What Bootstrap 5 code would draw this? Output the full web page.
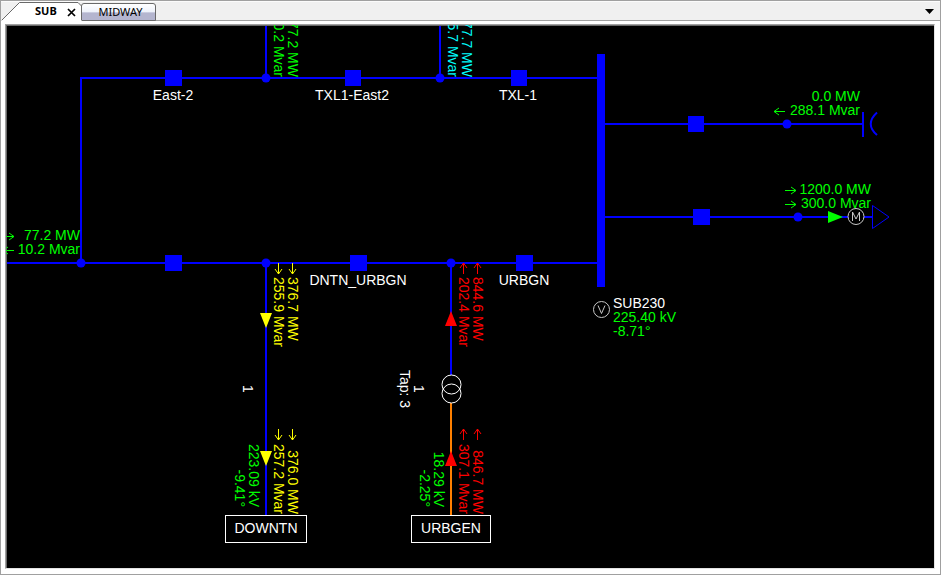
<!DOCTYPE html>
<html lang="en">
<head>
<meta charset="utf-8">
<meta name="viewport" content="width=device-width, initial-scale=1">
<title>SUB</title>
<link rel="stylesheet" href="https://cdn.jsdelivr.net/npm/bootstrap@5.3.0/dist/css/bootstrap.min.css">
<style>
.frame { border: 1px solid #a0a0a0; background: #fff; }
.tabstrip { height: 20px; background: #f0f0f0; border-top: 1px solid #fbfbfb; border-bottom: 1px solid #a0a0a0; font: 11px/16px "Noto Sans", "Open Sans", sans-serif; }
.tabstrip button { border: 0; background: transparent; padding: 0; color: #000; font: inherit; line-height: 16px; }
.tab-open { width: 80px; height: 19px; margin-bottom: -1px; padding: 1px 5px 2px 34px; }
.tab-open .name { font-weight: 700; }
.tab-open svg.outline { position: absolute; left: 0; top: 0; z-index: -1; }
.tabstrip .tab-back { width: 75px; height: 18px; padding: 0 0 0 4px; margin-bottom: -1px; border: 1px solid #696969; border-radius: 3px 3px 0 0; background: linear-gradient(#fff 0, #eef2fb 50%, #b4b5cf 55%, #b4b5cf 100%); }
.tabstrip svg { display: block; }
.tabstrip .more { padding: 3px 5px 0; }
.board { margin: 3px 5px 5px 4px; background: #000; border: 1px solid; border-color: #a0a0a0 #e3e3e3 #e3e3e3 #a0a0a0; box-shadow: inset 1px 1px 0 #696969; }
.board svg { font: 14px "Liberation Sans", Arial, sans-serif; }
.wire { stroke: #00f; stroke-width: 2; fill: none; shape-rendering: crispEdges; }
.breaker { fill: #00f; shape-rendering: crispEdges; }
.joint { fill: #00f; }
.flow { fill: none; stroke: currentColor; stroke-width: 1; }
.t-green { color: #0f0; fill: #0f0; }
.t-yellow { color: #ff0; fill: #ff0; }
.t-red { color: #f00; fill: #f00; }
.t-cyan { color: #0ff; fill: #0ff; }
.t-white { fill: #fff; }
.mid { text-anchor: middle; }
.fin { text-anchor: end; }
.bus-box { fill: #000; stroke: #fff; }
.dial { fill: #000; stroke: #c8c8c8; }
.dial-letter { fill: none; stroke: #c8c8c8; }
</style>
<script src="https://cdn.jsdelivr.net/npm/bootstrap@5.3.0/dist/js/bootstrap.bundle.min.js"></script>
</head>
<body>
<main class="frame d-flex flex-column vh-100 overflow-hidden">
  <div class="tabstrip d-flex align-items-end flex-shrink-0">
    <div class="tab-open position-relative z-1 d-flex justify-content-between align-items-center">
      <svg class="outline" width="81" height="19" aria-hidden="true"><path d="M0 19L18.500 .5H77L80.500 4V19z" fill="#fff"/><path d="M1 18L18.500 .5H77L80.500 4V18" fill="none" stroke="#696969"/></svg>
      <button class="name" type="button">SUB</button>
      <button type="button" aria-label="Close SUB"><svg width="9" height="16" aria-hidden="true"><path d="M1 6L8 13M8 6L1 13" stroke="#000" stroke-width="1.700"/></svg></button>
    </div>
    <button class="tab-back" type="button">MIDWAY</button>
    <button class="more ms-auto align-self-start" type="button" aria-label="Open tabs"><svg width="11" height="12" aria-hidden="true"><path d="M1 4H10L5.500 9z"/></svg></button>
  </div>
  <div class="board d-flex flex-grow-1 overflow-hidden">
    <svg width="100%" height="100%" role="img" aria-label="Substation one-line diagram">
      <defs>
        <path id="ar" d="M0 .5H11M6-3L11 .5L6 4"/>
      </defs>
      <g transform="translate(-6 -25)">
        <!-- Lines -->
        <g class="wire">
          <path d="M597 78H81V263M7 263H597M266 26V78M440 26V78M266 263V515M451 263V375M605 124H862M605 217H872"/>
          <path d="M863 112V137"/>
          <path d="M451 403V515" stroke="#ff8000"/>
        </g>
        <path d="M877 112.500Q864.500 124 877 135" fill="none" stroke="#00f" stroke-width="2"/>
        <path d="M872.500 205.500L889 217L872.500 228.500z" fill="#000" stroke="#00f"/>
        <!-- Bus and breakers -->
        <g class="breaker">
          <rect x="597" y="54" width="8" height="233"/>
          <rect x="165" y="70" width="17" height="16"/>
          <rect x="345" y="70" width="16" height="16"/>
          <rect x="511" y="70" width="16" height="16"/>
          <rect x="165" y="255" width="17" height="16"/>
          <rect x="350" y="255" width="17" height="16"/>
          <rect x="516" y="255" width="17" height="16"/>
          <rect x="688" y="116" width="16" height="16"/>
          <rect x="693" y="209" width="17" height="16"/>
        </g>
        <g class="joint">
          <circle cx="266" cy="78" r="4.500"/><circle cx="440" cy="78" r="4.500"/>
          <circle cx="81" cy="263" r="4.500"/><circle cx="266" cy="263" r="4.500"/>
          <circle cx="451" cy="263" r="4.500"/><circle cx="787" cy="124" r="4.500"/>
          <circle cx="798" cy="217" r="4.500"/>
        </g>
        <!-- Device names -->
        <g class="t-white mid">
          <text x="173" y="100">East-2</text>
          <text x="352" y="100">TXL1-East2</text>
          <text x="518" y="100">TXL-1</text>
          <text x="358" y="285">DNTN_URBGN</text>
          <text x="524" y="285">URBGN</text>
        </g>
        <!-- Bus readings -->
        <circle class="dial" cx="601.500" cy="309.500" r="8"/>
        <path class="dial-letter" d="M598 305.500L601.500 313.500L605 305.500"/>
        <text class="t-white" x="613" y="308">SUB230</text>
        <g class="t-green">
          <text x="613" y="322">225.40 kV</text>
          <text x="613" y="336">-8.71°</text>
        </g>
        <!-- Shunt and load -->
        <g class="t-green fin">
          <text x="860" y="101">0.0 MW</text>
          <text x="860" y="115">288.1 Mvar</text>
          <text x="871" y="194">1200.0 MW</text>
          <text x="871" y="208">300.0 Mvar</text>
          <text x="80" y="240">77.2 MW</text>
          <text x="80" y="254">10.2 Mvar</text>
        </g>
        <g class="t-green">
          <use href="#ar" class="flow" transform="translate(785 112) rotate(180)"/>
          <use href="#ar" class="flow" transform="translate(785 190)"/>
          <use href="#ar" class="flow" transform="translate(785 204)"/>
          <use href="#ar" class="flow" transform="translate(3 236)"/>
          <use href="#ar" class="flow" transform="translate(14 251) rotate(180)"/>
          <path d="M828 211L843 217L828 223z"/>
        </g>
        <circle class="dial" cx="856" cy="216.500" r="8"/>
        <path class="dial-letter" d="M852.500 221V212L856 219L859.500 212V221"/>
        <!-- Upper feeders -->
        <g class="fin">
          <text class="t-green" transform="translate(288 77) rotate(90)">77.2 MW</text>
          <text class="t-green" transform="translate(274 77) rotate(90)">10.2 Mvar</text>
          <text class="t-cyan" transform="translate(462 77) rotate(90)">77.7 MW</text>
          <text class="t-cyan" transform="translate(448 77) rotate(90)">15.7 Mvar</text>
        </g>
        <!-- Line to DOWNTN -->
        <g class="t-yellow">
          <use href="#ar" class="flow" transform="translate(293 263) rotate(90)"/>
          <use href="#ar" class="flow" transform="translate(279 263) rotate(90)"/>
          <use href="#ar" class="flow" transform="translate(293 429) rotate(90)"/>
          <use href="#ar" class="flow" transform="translate(279 429) rotate(90)"/>
          <text transform="translate(288 277) rotate(90)">376.7 MW</text>
          <text transform="translate(274 277) rotate(90)">255.9 Mvar</text>
          <text class="fin" transform="translate(288 514) rotate(90)">376.0 MW</text>
          <text class="fin" transform="translate(274 514) rotate(90)">257.2 Mvar</text>
          <path d="M260 313H272L266 328zM260 451H272L266 466z"/>
        </g>
        <text class="t-white" transform="translate(243 385) rotate(90)">1</text>
        <g class="t-green fin">
          <text transform="translate(249 507) rotate(90)">223.09 kV</text>
          <text transform="translate(235 507) rotate(90)">-9.41°</text>
          <text transform="translate(434 507) rotate(90)">18.29 kV</text>
          <text transform="translate(420 507) rotate(90)">-2.25°</text>
        </g>
        <!-- Transformer to URBGEN -->
        <g class="t-red">
          <use href="#ar" class="flow" transform="translate(477 274) rotate(-90)"/>
          <use href="#ar" class="flow" transform="translate(463 274) rotate(-90)"/>
          <use href="#ar" class="flow" transform="translate(477 440) rotate(-90)"/>
          <use href="#ar" class="flow" transform="translate(463 440) rotate(-90)"/>
          <text transform="translate(473 277) rotate(90)">844.6 MW</text>
          <text transform="translate(459 277) rotate(90)">202.4 Mvar</text>
          <text class="fin" transform="translate(473 514) rotate(90)">846.7 MW</text>
          <text class="fin" transform="translate(459 514) rotate(90)">307.1 Mvar</text>
          <path d="M445 326H457L451 311zM445 466H457L451 451z"/>
        </g>
        <g fill="none" stroke="#fff"><circle cx="451.500" cy="384.500" r="9.500"/><circle cx="451.500" cy="393.500" r="9.500"/></g>
        <g class="t-white">
          <text transform="translate(414 385) rotate(90)">1</text>
          <text transform="translate(400 370) rotate(90)">Tap: 3</text>
        </g>
        <!-- Remote buses -->
        <rect class="bus-box" x="225.500" y="515.500" width="81" height="27"/>
        <rect class="bus-box" x="411.500" y="515.500" width="79" height="27"/>
        <g class="t-white mid">
          <text x="266" y="533">DOWNTN</text>
          <text x="451" y="533">URBGEN</text>
        </g>
      </g>
    </svg>
  </div>
</main>
</body>
</html>
